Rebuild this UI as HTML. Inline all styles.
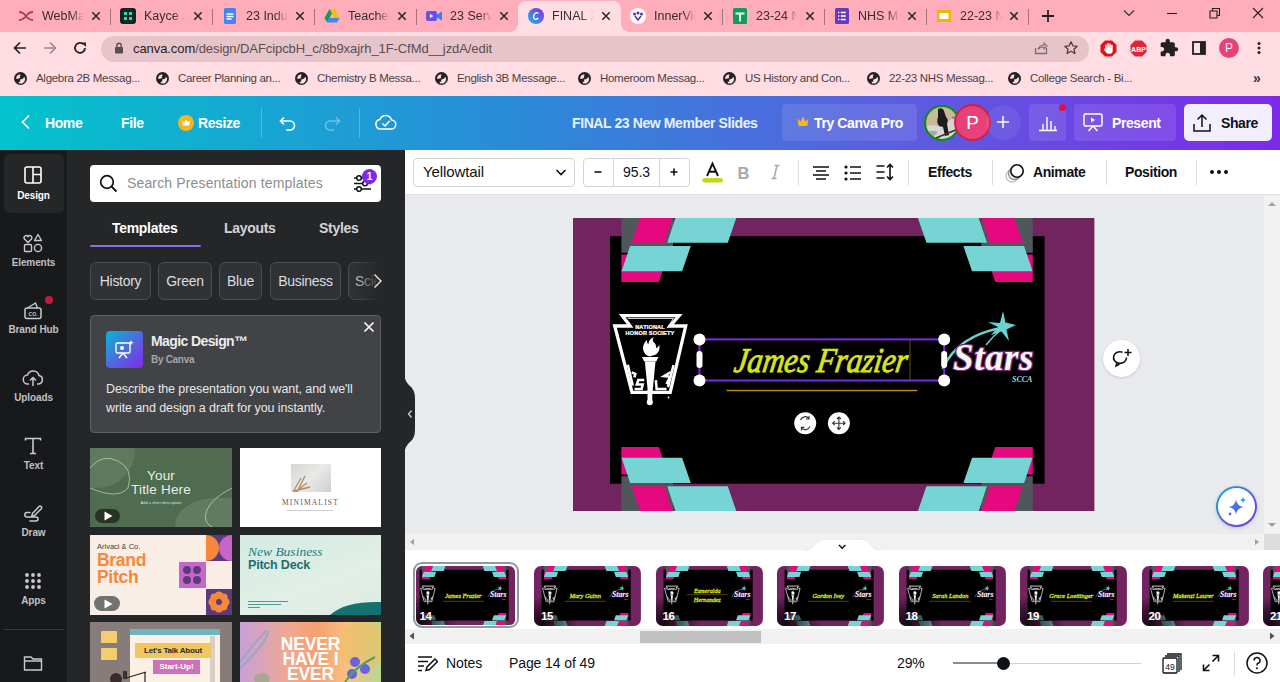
<!DOCTYPE html>
<html><head><meta charset="utf-8">
<style>
*{box-sizing:border-box;margin:0;padding:0}
html,body{width:1280px;height:682px;overflow:hidden;font-family:"Liberation Sans",sans-serif;background:#e8e9ed}
.a{position:absolute}
#tabs{left:0;top:0;width:1280px;height:32px;background:#ffadbb}
.tab{position:absolute;top:0;height:32px;width:103px}
.tab .ic{position:absolute;left:17px;top:8px;width:16px;height:16px}
.tab .t{position:absolute;left:42px;top:8px;width:42px;overflow:hidden;white-space:nowrap;font-size:12.5px;color:#3b2a2e;-webkit-mask-image:linear-gradient(90deg,#000 70%,transparent)}
.tab .x{position:absolute;left:78px;top:8px;width:16px;height:16px}
.tab .sep{position:absolute;left:109px;top:9px;width:1px;height:16px;background:#a5757e}
#addr{left:0;top:32px;width:1280px;height:32px;background:#ffdde3}
#omni{left:101px;top:36px;width:988px;height:26px;border-radius:13px;background:#e6c4ca}
#bm{left:0;top:64px;width:1280px;height:32px;background:#ffdde3}
.bk{position:absolute;top:0;height:32px;font-size:11.5px;letter-spacing:-0.3px;color:#4a3f43;white-space:nowrap}
.bk svg{position:absolute;left:1px;top:8px}
.bk span{position:absolute;left:23px;top:8px}
#hdr{left:0;top:96px;width:1280px;height:54px;background:linear-gradient(90deg,#03c3cc 0%,#2a8bd8 40%,#5b5ee0 70%,#7d2ae8 100%)}
.ht{position:absolute;color:#fff;font-weight:bold;font-size:14px;letter-spacing:-0.4px;line-height:16px;white-space:nowrap}
#side{left:0;top:150px;width:67px;height:532px;background:#18191b}
.si{position:absolute;left:0;width:67px;text-align:center;color:#bfc0c3;font-size:10px;font-weight:bold;letter-spacing:-0.1px}
#panel{left:67px;top:150px;width:338px;height:532px;background:#252627}
#tool{left:405px;top:150px;width:875px;height:45px;background:#fff;border-bottom:1px solid #dfe1e5}
#canvas{left:405px;top:195px;width:859px;height:339px;background:#e9eaee}
#film{left:405px;top:550px;width:875px;height:92px;background:#fff}
#bot{left:405px;top:642px;width:875px;height:40px;background:#fff}

.tab .ic{left:17px}
.tab .t{left:41px;top:9px}
.tab .x{position:absolute;left:87px;top:8px}
.tab.act::before{content:"";position:absolute;left:7px;top:1px;width:103px;height:31px;background:#ffdde3;border-radius:8px 8px 0 0}
.tab.act .ic,.tab.act .t,.tab.act .x{z-index:1}
.tab.act::after{content:"";position:absolute;left:-1px;top:24px;width:119px;height:8px;background:radial-gradient(circle at 0 0,transparent 7.5px,#ffdde3 8px) left top/8px 8px no-repeat,radial-gradient(circle at 100% 0,transparent 7.5px,#ffdde3 8px) right top/8px 8px no-repeat}
.chip{position:absolute;top:262px;height:38px;border-radius:6px;background:#313235;border:1px solid #4b4c50;color:#dcdde0;font-size:14px;text-align:center;line-height:36px;letter-spacing:-0.3px;white-space:nowrap;overflow:hidden}
.tb{position:absolute;top:164px;font-size:14px;font-weight:bold;letter-spacing:-0.4px;color:#0d1216;white-space:nowrap;line-height:16px}
.bt{position:absolute;top:655px;font-size:14px;color:#0d1216;white-space:nowrap;line-height:16px;letter-spacing:-0.1px}
</style></head><body>
<div id="tabs" class="a">
<div class="tab" style="left:1px"><div class="ic"><svg width="16" height="16" viewBox="0 0 16 16"><path d="M1 4 Q5 4 8 8 Q11 12 15 12 M1 12 Q5 12 8 8 Q11 4 15 4" stroke="#b0404a" stroke-width="1.8" fill="none"/></svg></div><div class="t">WebMail</div><svg class="x" width="16" height="16" viewBox="0 0 16 16"><path d="M4.3 4.3l7.4 7.4M11.7 4.3l-7.4 7.4" stroke="#2a2a2a" stroke-width="1.6"/></svg><div class="sep"></div></div>
<div class="tab" style="left:103px"><div class="ic"><svg width="16" height="16" viewBox="0 0 16 16"><rect x="0" y="0" width="16" height="16" rx="3" fill="#0c2a22"/><path d="M4 4h3v3H4zM9 4h3v3H9zM4 9h3v3H4zM9 9h3v3H9z" fill="#3fd9a0"/></svg></div><div class="t">Kayce Jones</div><svg class="x" width="16" height="16" viewBox="0 0 16 16"><path d="M4.3 4.3l7.4 7.4M11.7 4.3l-7.4 7.4" stroke="#2a2a2a" stroke-width="1.6"/></svg><div class="sep"></div></div>
<div class="tab" style="left:205px"><div class="ic"><svg width="16" height="16" viewBox="0 0 16 16"><rect x="2" y="0" width="12" height="16" rx="1.5" fill="#4286f5"/><path d="M4.5 6h7M4.5 8.5h7M4.5 11h5" stroke="#fff" stroke-width="1.3"/></svg></div><div class="t">23 Induction</div><svg class="x" width="16" height="16" viewBox="0 0 16 16"><path d="M4.3 4.3l7.4 7.4M11.7 4.3l-7.4 7.4" stroke="#2a2a2a" stroke-width="1.6"/></svg><div class="sep"></div></div>
<div class="tab" style="left:307px"><div class="ic"><svg width="16" height="16" viewBox="0 0 16 16"><path d="M5.5 1h5l5 9h-5z" fill="#fbbc04"/><path d="M5.5 1L0.5 10l2.5 4.5 5-9z" fill="#0f9d58"/><path d="M3 14.5h10l2.5-4.5h-10z" fill="#4285f4"/></svg></div><div class="t">Teacher's</div><svg class="x" width="16" height="16" viewBox="0 0 16 16"><path d="M4.3 4.3l7.4 7.4M11.7 4.3l-7.4 7.4" stroke="#2a2a2a" stroke-width="1.6"/></svg><div class="sep"></div></div>
<div class="tab" style="left:409px"><div class="ic"><svg width="16" height="16" viewBox="0 0 16 16"><rect x="0" y="3" width="11" height="10" rx="2" fill="#6a4ff0"/><path d="M11 6.5l5-3v9l-5-3z" fill="#3a7cf0"/><path d="M4 6l3.5 2L4 10z" fill="#fff"/></svg></div><div class="t">23 Service</div><svg class="x" width="16" height="16" viewBox="0 0 16 16"><path d="M4.3 4.3l7.4 7.4M11.7 4.3l-7.4 7.4" stroke="#2a2a2a" stroke-width="1.6"/></svg></div>
<div class="tab act" style="left:511px"><div class="ic"><svg width="16" height="16" viewBox="0 0 16 16"><defs><linearGradient id="cg" x1="0" y1="1" x2="1" y2="0"><stop offset="0" stop-color="#20b8e0"/><stop offset="1" stop-color="#7d2ae8"/></linearGradient></defs><circle cx="8" cy="8" r="8" fill="url(#cg)"/><path d="M10.5 5.2Q8 3.8 6.2 6.5Q4.8 9.5 6.5 11Q8.2 12 10.3 10" stroke="#fff" stroke-width="1.3" fill="none"/></svg></div><div class="t">FINAL 23 New</div><svg class="x" width="16" height="16" viewBox="0 0 16 16"><path d="M4.3 4.3l7.4 7.4M11.7 4.3l-7.4 7.4" stroke="#2a2a2a" stroke-width="1.6"/></svg></div>
<div class="tab" style="left:613px"><div class="ic"><svg width="16" height="16" viewBox="0 0 16 16"><circle cx="8" cy="8" r="8" fill="#fff"/><circle cx="4.5" cy="6" r="1.5" fill="#6b2c91"/><circle cx="11.5" cy="6" r="1.5" fill="#6b2c91"/><circle cx="8" cy="5" r="1.5" fill="#6b2c91"/><path d="M5 8l3 4 3-4" stroke="#6b2c91" stroke-width="1.6" fill="none"/></svg></div><div class="t">InnerView</div><svg class="x" width="16" height="16" viewBox="0 0 16 16"><path d="M4.3 4.3l7.4 7.4M11.7 4.3l-7.4 7.4" stroke="#2a2a2a" stroke-width="1.6"/></svg><div class="sep"></div></div>
<div class="tab" style="left:715px"><div class="ic"><svg width="16" height="16" viewBox="0 0 16 16"><rect x="1" y="0" width="14" height="16" rx="1.5" fill="#0f9d58"/><path d="M3.5 5.5h9M8 5.5v8" stroke="#fff" stroke-width="1.8"/></svg></div><div class="t">23-24 NHS</div><svg class="x" width="16" height="16" viewBox="0 0 16 16"><path d="M4.3 4.3l7.4 7.4M11.7 4.3l-7.4 7.4" stroke="#2a2a2a" stroke-width="1.6"/></svg><div class="sep"></div></div>
<div class="tab" style="left:817px"><div class="ic"><svg width="16" height="16" viewBox="0 0 16 16"><rect x="1" y="0" width="14" height="16" rx="1.5" fill="#673ab7"/><path d="M4 4.5h1.3M4 8h1.3M4 11.5h1.3M6.8 4.5h5M6.8 8h5M6.8 11.5h5" stroke="#fff" stroke-width="1.4"/></svg></div><div class="t">NHS Meeting</div><svg class="x" width="16" height="16" viewBox="0 0 16 16"><path d="M4.3 4.3l7.4 7.4M11.7 4.3l-7.4 7.4" stroke="#2a2a2a" stroke-width="1.6"/></svg><div class="sep"></div></div>
<div class="tab" style="left:919px"><div class="ic"><svg width="16" height="16" viewBox="0 0 16 16"><rect x="1" y="2" width="14" height="12" rx="1.5" fill="#f4b400"/><rect x="3.5" y="5" width="9" height="6" fill="#fff"/></svg></div><div class="t">22-23 NHS</div><svg class="x" width="16" height="16" viewBox="0 0 16 16"><path d="M4.3 4.3l7.4 7.4M11.7 4.3l-7.4 7.4" stroke="#2a2a2a" stroke-width="1.6"/></svg><div class="sep"></div></div>

</div>
<div id="addr" class="a"></div>
<div id="omni" class="a"></div>
<div id="bm" class="a"></div>

<svg class="a" style="left:1040px;top:8px" width="16" height="16" viewBox="0 0 16 16"><path d="M8 2v12M2 8h12" stroke="#222" stroke-width="1.8"/></svg>
<svg class="a" style="left:1121px;top:5px" width="16" height="16" viewBox="0 0 16 16"><path d="M3 5.5l5 5 5-5" stroke="#333" stroke-width="1.2" fill="none"/></svg>
<svg class="a" style="left:1164px;top:5px" width="16" height="16" viewBox="0 0 16 16"><path d="M3 8.5h10" stroke="#222" stroke-width="1.1"/></svg>
<svg class="a" style="left:1207px;top:5px" width="16" height="16" viewBox="0 0 16 16"><path d="M3 6h7v7H3z M5.5 6V3.5h7v7H10" stroke="#222" stroke-width="1.1" fill="none"/></svg>
<svg class="a" style="left:1250px;top:5px" width="16" height="16" viewBox="0 0 16 16"><path d="M3 3l10 10M13 3L3 13" stroke="#222" stroke-width="1.1"/></svg>

<svg class="a" style="left:12px;top:40px" width="16" height="16" viewBox="0 0 16 16"><path d="M14 8H2.5M8 2.5L2.5 8 8 13.5" stroke="#222" stroke-width="1.7" fill="none"/></svg>
<svg class="a" style="left:42px;top:40px" width="16" height="16" viewBox="0 0 16 16"><path d="M2 8h11.5M8 2.5L13.5 8 8 13.5" stroke="#9a8a8e" stroke-width="1.7" fill="none"/></svg>
<svg class="a" style="left:72px;top:40px" width="16" height="16" viewBox="0 0 16 16"><path d="M13 8A5 5 0 1 1 11.5 4.3" stroke="#222" stroke-width="1.8" fill="none"/><path d="M9.5 2.5h4.5V7z" fill="#222"/></svg>
<svg class="a" style="left:112px;top:41px" width="14" height="14" viewBox="0 0 14 14"><rect x="3" y="6" width="8" height="6.5" rx="1" fill="#5a4d51"/><path d="M4.8 6V4.5a2.2 2.2 0 0 1 4.4 0V6" stroke="#5a4d51" stroke-width="1.4" fill="none"/></svg>
<div class="a" style="left:133px;top:41px;font-size:13px;color:#5a4d51;white-space:nowrap;letter-spacing:-0.08px"><span style="color:#2a2023">canva.com</span>/design/DAFcipcbH_c/8b9xajrh_1F-CfMd__jzdA/edit</div>
<svg class="a" style="left:1033px;top:40px" width="16" height="16" viewBox="0 0 16 16"><path d="M2.5 8v5.5h11V8" stroke="#7a6d71" stroke-width="1.3" fill="none"/><path d="M5 9.5q1-4 6-4.5V3l3 3-3 3V7q-4 0-6 2.5z" stroke="#7a6d71" stroke-width="1.1" fill="none"/></svg>
<svg class="a" style="left:1063px;top:40px" width="16" height="16" viewBox="0 0 16 16"><path d="M8 1.8l1.9 4 4.3.5-3.2 2.9.9 4.3L8 11.3l-3.9 2.2.9-4.3-3.2-2.9 4.3-.5z" stroke="#4a3d41" stroke-width="1.3" fill="none" stroke-linejoin="round"/></svg>
<svg class="a" style="left:1100px;top:40px" width="17" height="17" viewBox="0 0 17 17"><path d="M5 0.5h7l4.5 4.5v7L12 16.5H5L0.5 12V5z" fill="#e0121b"/><path d="M5.2 9.5V5.2a.8.8 0 0 1 1.6 0V8h.4V3.8a.8.8 0 0 1 1.6 0V8h.4V4.2a.8.8 0 0 1 1.6 0V8.3h.3V5.5a.8.8 0 0 1 1.6 0v5.2q0 3-3 3H8.6q-1.5 0-2.5-1.3L4 9.8a.8.8 0 0 1 1.2-1z" fill="#fff"/></svg>
<svg class="a" style="left:1130px;top:40px" width="17" height="17" viewBox="0 0 17 17"><path d="M5 0.5h7l4.5 4.5v7L12 16.5H5L0.5 12V5z" fill="#e0243a"/><text x="8.5" y="11.5" font-family="Liberation Sans" font-weight="bold" font-size="7" fill="#fff" text-anchor="middle">ABP</text></svg>
<svg class="a" style="left:1159px;top:38px" width="20" height="20" viewBox="0 0 24 24"><path d="M20.5 11H19V7c0-1.1-.9-2-2-2h-4V3.5C13 2.12 11.88 1 10.5 1S8 2.12 8 3.5V5H4c-1.1 0-1.99.9-1.99 2v3.8H3.5c1.49 0 2.7 1.21 2.7 2.7s-1.21 2.7-2.7 2.7H2V20c0 1.1.9 2 2 2h3.8v-1.5c0-1.490 1.21-2.7 2.7-2.7 1.49 0 2.7 1.21 2.7 2.7V22H17c1.1 0 2-.9 2-2v-4h1.5c1.38 0 2.5-1.12 2.5-2.5S21.88 11 20.5 11z" fill="#222"/></svg>
<svg class="a" style="left:1191px;top:40px" width="16" height="16" viewBox="0 0 16 16"><rect x="2" y="2" width="12" height="12" fill="none" stroke="#222" stroke-width="1.8"/><rect x="9" y="2" width="5" height="12" fill="#222"/></svg>
<div class="a" style="left:1219px;top:38px;width:20px;height:20px;border-radius:50%;background:#e8407a;color:#fff;font-size:12px;text-align:center;line-height:20px">P</div>
<svg class="a" style="left:1251px;top:40px" width="16" height="16" viewBox="0 0 16 16"><circle cx="8" cy="3.5" r="1.5" fill="#222"/><circle cx="8" cy="8" r="1.5" fill="#222"/><circle cx="8" cy="12.5" r="1.5" fill="#222"/></svg>
<div class="bk" style="left:13px;top:64px"><svg width="13" height="13" viewBox="0 0 13 13"><circle cx="6.5" cy="6.5" r="6.5" fill="#222"/><path d="M2.1 5.8L3.4 3.2 6 2.2 6.6 3.2 5.7 4.5 6.3 5.8 4.1 6.8 2.1 6.8z M4.4 10.6L6.6 9 5.7 7.7 8.9 6.8 10.2 4.8 11.2 6.8 10.5 9.6 8.3 11.6 5.4 11.6z" fill="#ffdde3"/></svg><span>Algebra 2B Messag...</span></div>
<div class="bk" style="left:155px;top:64px"><svg width="13" height="13" viewBox="0 0 13 13"><circle cx="6.5" cy="6.5" r="6.5" fill="#222"/><path d="M2.1 5.8L3.4 3.2 6 2.2 6.6 3.2 5.7 4.5 6.3 5.8 4.1 6.8 2.1 6.8z M4.4 10.6L6.6 9 5.7 7.7 8.9 6.8 10.2 4.8 11.2 6.8 10.5 9.6 8.3 11.6 5.4 11.6z" fill="#ffdde3"/></svg><span>Career Planning an...</span></div>
<div class="bk" style="left:294px;top:64px"><svg width="13" height="13" viewBox="0 0 13 13"><circle cx="6.5" cy="6.5" r="6.5" fill="#222"/><path d="M2.1 5.8L3.4 3.2 6 2.2 6.6 3.2 5.7 4.5 6.3 5.8 4.1 6.8 2.1 6.8z M4.4 10.6L6.6 9 5.7 7.7 8.9 6.8 10.2 4.8 11.2 6.8 10.5 9.6 8.3 11.6 5.4 11.6z" fill="#ffdde3"/></svg><span>Chemistry B Messa...</span></div>
<div class="bk" style="left:434px;top:64px"><svg width="13" height="13" viewBox="0 0 13 13"><circle cx="6.5" cy="6.5" r="6.5" fill="#222"/><path d="M2.1 5.8L3.4 3.2 6 2.2 6.6 3.2 5.7 4.5 6.3 5.8 4.1 6.8 2.1 6.8z M4.4 10.6L6.6 9 5.7 7.7 8.9 6.8 10.2 4.8 11.2 6.8 10.5 9.6 8.3 11.6 5.4 11.6z" fill="#ffdde3"/></svg><span>English 3B Message...</span></div>
<div class="bk" style="left:577px;top:64px"><svg width="13" height="13" viewBox="0 0 13 13"><circle cx="6.5" cy="6.5" r="6.5" fill="#222"/><path d="M2.1 5.8L3.4 3.2 6 2.2 6.6 3.2 5.7 4.5 6.3 5.8 4.1 6.8 2.1 6.8z M4.4 10.6L6.6 9 5.7 7.7 8.9 6.8 10.2 4.8 11.2 6.8 10.5 9.6 8.3 11.6 5.4 11.6z" fill="#ffdde3"/></svg><span>Homeroom Messag...</span></div>
<div class="bk" style="left:722px;top:64px"><svg width="13" height="13" viewBox="0 0 13 13"><circle cx="6.5" cy="6.5" r="6.5" fill="#222"/><path d="M2.1 5.8L3.4 3.2 6 2.2 6.6 3.2 5.7 4.5 6.3 5.8 4.1 6.8 2.1 6.8z M4.4 10.6L6.6 9 5.7 7.7 8.9 6.8 10.2 4.8 11.2 6.8 10.5 9.6 8.3 11.6 5.4 11.6z" fill="#ffdde3"/></svg><span>US History and Con...</span></div>
<div class="bk" style="left:866px;top:64px"><svg width="13" height="13" viewBox="0 0 13 13"><circle cx="6.5" cy="6.5" r="6.5" fill="#222"/><path d="M2.1 5.8L3.4 3.2 6 2.2 6.6 3.2 5.7 4.5 6.3 5.8 4.1 6.8 2.1 6.8z M4.4 10.6L6.6 9 5.7 7.7 8.9 6.8 10.2 4.8 11.2 6.8 10.5 9.6 8.3 11.6 5.4 11.6z" fill="#ffdde3"/></svg><span>22-23 NHS Messag...</span></div>
<div class="bk" style="left:1007px;top:64px"><svg width="13" height="13" viewBox="0 0 13 13"><circle cx="6.5" cy="6.5" r="6.5" fill="#222"/><path d="M2.1 5.8L3.4 3.2 6 2.2 6.6 3.2 5.7 4.5 6.3 5.8 4.1 6.8 2.1 6.8z M4.4 10.6L6.6 9 5.7 7.7 8.9 6.8 10.2 4.8 11.2 6.8 10.5 9.6 8.3 11.6 5.4 11.6z" fill="#ffdde3"/></svg><span>College Search - Bi...</span></div>
<div class="a" style="left:1253px;top:70px;font-size:14px;font-weight:bold;color:#333">&raquo;</div>

<div id="hdr" class="a"></div>

<svg class="a" style="left:18px;top:114px" width="16" height="16" viewBox="0 0 16 16"><path d="M11 1.5L4.5 8l6.5 6.5" stroke="#fff" stroke-width="1.6" fill="none"/></svg>
<div class="ht" style="left:45px;top:115px">Home</div>
<div class="ht" style="left:121px;top:115px">File</div>
<svg class="a" style="left:178px;top:115px" width="16" height="16" viewBox="0 0 16 16"><circle cx="8" cy="8" r="8" fill="#f8b51c"/><path d="M4 5.5l2 2 2-3 2 3 2-2-.8 5H4.8z" fill="#fff"/></svg>
<div class="ht" style="left:198px;top:115px">Resize</div>
<div class="a" style="left:261px;top:108px;width:1px;height:30px;background:rgba(255,255,255,.25)"></div>
<svg class="a" style="left:278px;top:113px" width="20" height="20" viewBox="0 0 20 20"><path d="M6 4.5L2.5 8 6 11.5" stroke="#fff" stroke-width="1.6" fill="none"/><path d="M3 8h9a4.5 4.5 0 0 1 0 9H8" stroke="#fff" stroke-width="1.6" fill="none"/></svg>
<svg class="a" style="left:322px;top:113px" width="20" height="20" viewBox="0 0 20 20"><path d="M14 4.5L17.5 8 14 11.5" stroke="rgba(255,255,255,.35)" stroke-width="1.6" fill="none"/><path d="M17 8H8a4.5 4.5 0 0 0 0 9h4" stroke="rgba(255,255,255,.35)" stroke-width="1.6" fill="none"/></svg>
<div class="a" style="left:359px;top:108px;width:1px;height:30px;background:rgba(255,255,255,.25)"></div>
<svg class="a" style="left:374px;top:111px" width="23" height="23" viewBox="0 0 23 23"><path d="M6 18h11a4.5 4.5 0 0 0 .5-9A6 6 0 0 0 6 8.5 4.8 4.8 0 0 0 6 18z" stroke="#fff" stroke-width="1.5" fill="none"/><path d="M8.5 12.5l2.5 2.5 4.5-5" stroke="#fff" stroke-width="1.5" fill="none"/></svg>
<div class="ht" style="left:572px;top:115px;color:#e8f1ff">FINAL 23 New Member Slides</div>
<div class="a" style="left:782px;top:104px;width:135px;height:37px;border-radius:4px;background:rgba(255,255,255,.1)"></div>
<svg class="a" style="left:797px;top:116px" width="12" height="11" viewBox="0 0 12 11"><path d="M0.5 2.5l3 3 2.5-5 2.5 5 3-3-1.2 7.5H1.7z" fill="#f8b51c"/></svg>
<div class="ht" style="left:814px;top:115px">Try Canva Pro</div>
<svg class="a" style="left:923.5px;top:104.5px" width="36" height="36" viewBox="0 0 36 36"><defs><clipPath id="av"><circle cx="18" cy="18" r="17"/></clipPath></defs><g clip-path="url(#av)"><rect width="36" height="36" fill="#c9b994"/><path d="M0 22 Q6 19 14 21 Q22 18 28 14 Q33 12 36 16 V36 H0z" fill="#d6d6d2"/><path d="M2 28 Q8 24 14 27 Q10 32 4 34z" fill="#a8a8a8"/><path d="M14 4 Q19 2 20 6 L22 12 Q25 15 23 19 L25 30 L21 31 L19 22 L15 21 Q12 17 14 12z" fill="#1c1c1c"/><path d="M12 33 L34 24" stroke="#333" stroke-width="1.6"/><path d="M28 13 Q32 11 34 15" stroke="#888" stroke-width="2" fill="none"/></g><circle cx="18" cy="18" r="17" fill="none" stroke="#118a22" stroke-width="2.2"/></svg>
<div class="a" style="left:954px;top:104px;width:37px;height:37px;border-radius:50%;border:2px solid #d0213f;background:#e8407a;color:#fff;font-size:19px;text-align:center;line-height:33px">P</div>
<div class="a" style="left:986px;top:105px;width:35px;height:35px;border-radius:50%;background:rgba(255,255,255,.07);"></div>
<svg class="a" style="left:995px;top:114px" width="16" height="16" viewBox="0 0 16 16"><path d="M8 2v12M2 8h12" stroke="#fff" stroke-width="1.5"/></svg>
<div class="a" style="left:1029px;top:104px;width:37px;height:37px;border-radius:4px;background:rgba(255,255,255,.1)"></div>
<svg class="a" style="left:1037px;top:112px" width="22" height="22" viewBox="0 0 22 22"><path d="M2 18.5h18M6 18V12M10 18V5M14 18V9M18 18v-4" stroke="#fff" stroke-width="1.4"/></svg>
<div class="a" style="left:1059px;top:104px;width:7px;height:7px;border-radius:50%;background:#e0123a"></div>
<div class="a" style="left:1074px;top:104px;width:102px;height:37px;border-radius:4px;background:rgba(255,255,255,.1)"></div>
<svg class="a" style="left:1082px;top:111px" width="22" height="22" viewBox="0 0 22 22"><rect x="2" y="3" width="18" height="12" rx="1.5" stroke="#fff" stroke-width="1.5" fill="none"/><path d="M9 6.5v5l4-2.5z" fill="#fff"/><path d="M11 15l-4.5 5M11 15l4.5 5" stroke="#fff" stroke-width="1.5"/></svg>
<div class="ht" style="left:1112px;top:115px">Present</div>
<div class="a" style="left:1184px;top:104px;width:88px;height:37px;border-radius:5px;background:#f2eefd"></div>
<svg class="a" style="left:1191px;top:112px" width="22" height="22" viewBox="0 0 22 22"><path d="M3 12v7h16v-7" stroke="#0d1216" stroke-width="1.5" fill="none"/><path d="M11 15V3M6.5 7.5L11 3l4.5 4.5" stroke="#0d1216" stroke-width="1.5" fill="none"/></svg>
<div class="ht" style="left:1221px;top:115px;color:#0d1216">Share</div>
<div id="side" class="a"></div>
<div id="panel" class="a"></div>
<div class="a" style="left:4px;top:154px;width:60px;height:59px;border-radius:6px;background:#252627"></div>
<svg class="a" style="left:22px;top:164px" width="22" height="22" viewBox="0 0 22 22"><rect x="3" y="3" width="16" height="16" rx="2" stroke="#fff" stroke-width="1.6" fill="none"/><path d="M11 3v16M11 10.5h8" stroke="#fff" stroke-width="1.6"/></svg>
<div class="si" style="top:190px;color:#fff">Design</div>
<svg class="a" style="left:22px;top:232px" width="22" height="22" viewBox="0 0 22 22"><path d="M6 10.5L2.5 7a2 2 0 0 1 3.5-2.5A2 2 0 0 1 9.5 7z" stroke="#c9cacc" stroke-width="1.4" fill="none"/><path d="M16 2.5l3.5 6h-7z" stroke="#c9cacc" stroke-width="1.4" fill="none" stroke-linejoin="round"/><rect x="2.5" y="12.5" width="7" height="7" rx="1" stroke="#c9cacc" stroke-width="1.4" fill="none"/><circle cx="16" cy="16" r="3.6" stroke="#c9cacc" stroke-width="1.4" fill="none"/></svg>
<div class="si" style="top:257px">Elements</div>
<svg class="a" style="left:22px;top:299px" width="22" height="22" viewBox="0 0 22 22"><rect x="3" y="9" width="16" height="10.5" rx="2" stroke="#c9cacc" stroke-width="1.5" fill="none"/><path d="M5.5 9l8-5 2 5" stroke="#c9cacc" stroke-width="1.4" fill="none"/><text x="11" y="16.8" font-family="Liberation Sans" font-weight="bold" font-size="5" fill="#c9cacc" text-anchor="middle">CO.</text></svg>
<div class="a" style="left:45px;top:296px;width:8px;height:8px;border-radius:50%;background:#c01b3a"></div>
<div class="si" style="top:324px">Brand Hub</div>
<svg class="a" style="left:22px;top:367px" width="22" height="22" viewBox="0 0 22 22"><path d="M7 17H6a4.5 4.5 0 0 1-.5-9A6 6 0 0 1 17 8.5a4.3 4.3 0 0 1-1 8.5h-1" stroke="#c9cacc" stroke-width="1.5" fill="none"/><path d="M11 19v-8M8 13.5l3-3 3 3" stroke="#c9cacc" stroke-width="1.5" fill="none"/></svg>
<div class="si" style="top:392px">Uploads</div>
<svg class="a" style="left:22px;top:435px" width="22" height="22" viewBox="0 0 22 22"><path d="M3.5 5.5V3.5h15v2M11 3.5v15M8 18.5h6" stroke="#c9cacc" stroke-width="1.6" fill="none"/></svg>
<div class="si" style="top:460px">Text</div>
<svg class="a" style="left:22px;top:502px" width="22" height="22" viewBox="0 0 22 22"><path d="M10.5 11.5l6.5-7a1.6 1.6 0 0 1 2.3 2.2l-6.8 6.8-2.8.8z" stroke="#c9cacc" stroke-width="1.5" fill="none" stroke-linejoin="round"/><path d="M8 10.5H5a2.2 2.2 0 0 0 0 4.4h9a2 2 0 0 1 0 4H8" stroke="#c9cacc" stroke-width="1.5" fill="none" stroke-linecap="round"/></svg>
<div class="si" style="top:527px">Draw</div>
<svg class="a" style="left:24px;top:572px" width="18" height="18" viewBox="0 0 18 18"><g fill="#c9cacc"><circle cx="3" cy="3" r="1.9"/><circle cx="9" cy="3" r="1.9"/><circle cx="15" cy="3" r="1.9"/><circle cx="3" cy="9" r="1.9"/><circle cx="9" cy="9" r="1.9"/><circle cx="15" cy="9" r="1.9"/><circle cx="3" cy="15" r="1.9"/><circle cx="9" cy="15" r="1.9"/><circle cx="15" cy="15" r="1.9"/></g></svg>
<div class="si" style="top:595px">Apps</div>
<div class="a" style="left:4px;top:629px;width:60px;height:1px;background:#3a3b3e"></div>
<svg class="a" style="left:22px;top:652px" width="22" height="22" viewBox="0 0 22 22"><path d="M2.5 5h6.5l2 2h8.5v11h-17z M2.5 9h17" stroke="#c9cacc" stroke-width="1.4" fill="none"/></svg>

<div class="a" style="left:90px;top:165px;width:291px;height:37px;border-radius:4px;background:#fff"></div>
<svg class="a" style="left:98px;top:173px" width="21" height="21" viewBox="0 0 21 21"><circle cx="9" cy="9" r="6.3" stroke="#0d1216" stroke-width="1.7" fill="none"/><path d="M13.5 13.5l5 5" stroke="#0d1216" stroke-width="1.8"/></svg>
<div class="a" style="left:127px;top:175px;font-size:14px;color:#8a8d91;white-space:nowrap;letter-spacing:0.15px">Search Presentation templates</div>
<svg class="a" style="left:352px;top:173px" width="21" height="21" viewBox="0 0 21 21"><path d="M2 5h17M2 10.5h17M2 16h17" stroke="#0d1216" stroke-width="1.5"/><circle cx="7" cy="5" r="2.3" fill="#fff" stroke="#0d1216" stroke-width="1.5"/><circle cx="13" cy="10.5" r="2.3" fill="#fff" stroke="#0d1216" stroke-width="1.5"/><circle cx="7" cy="16" r="2.3" fill="#fff" stroke="#0d1216" stroke-width="1.5"/></svg>
<div class="a" style="left:362px;top:169px;width:15px;height:15px;border-radius:50%;background:#7d2ae8;color:#fff;font-size:10px;font-weight:bold;text-align:center;line-height:15px">1</div>
<div class="a" style="left:112px;top:220px;font-size:14px;font-weight:bold;color:#fff;letter-spacing:-0.3px">Templates</div>
<div class="a" style="left:90px;top:245px;width:111px;height:2px;background:#8b6ff0;border-radius:1px"></div>
<div class="a" style="left:224px;top:220px;font-size:14px;font-weight:bold;color:#d2d3d6;letter-spacing:-0.3px">Layouts</div>
<div class="a" style="left:319px;top:220px;font-size:14px;font-weight:bold;color:#d2d3d6;letter-spacing:-0.3px">Styles</div>
<div class="chip" style="left:90px;width:61px">History</div>
<div class="chip" style="left:158px;width:54px">Green</div>
<div class="chip" style="left:219px;width:43px">Blue</div>
<div class="chip" style="left:270px;width:71px">Business</div>
<div class="a" style="left:348px;top:262px;width:33px;height:38px;overflow:hidden"><div class="chip" style="left:0;top:0;width:60px;text-align:left;padding-left:6px">Science</div></div>
<div class="a" style="left:352px;top:262px;width:30px;height:38px;background:linear-gradient(90deg,rgba(37,38,39,0),#252627 95%)"></div>
<svg class="a" style="left:370px;top:273px" width="14" height="16" viewBox="0 0 14 16"><path d="M4.5 1.5l6.5 6.5-6.5 6.5" stroke="#e8e8e8" stroke-width="1.4" fill="none"/></svg>
<div class="a" style="left:90px;top:315px;width:291px;height:118px;border-radius:4px;background:#424346;border:1px solid #5d5e61"></div>
<div class="a" style="left:106px;top:331px;width:37px;height:37px;border-radius:4px;background:linear-gradient(135deg,#03b8d4,#5b5ee0 60%,#7d2ae8)"></div>
<svg class="a" style="left:112px;top:337px" width="25" height="25" viewBox="0 0 25 25"><rect x="4" y="6" width="14" height="10" rx="1.5" stroke="#fff" stroke-width="1.4" fill="none"/><circle cx="10" cy="11" r="2" fill="#fff"/><path d="M11 16l-4 5M11 16l4 5" stroke="#fff" stroke-width="1.4"/><path d="M19 3l.8 2 2 .8-2 .8-.8 2-.8-2-2-.8 2-.8z" fill="#fff"/></svg>
<div class="a" style="left:151px;top:333px;font-size:14px;font-weight:bold;color:#ececec;letter-spacing:-0.6px">Magic Design&trade;</div>
<div class="a" style="left:151px;top:353.5px;font-size:10px;font-weight:bold;color:#a5a6a9;letter-spacing:-0.3px">By Canva</div>
<svg class="a" style="left:362px;top:320px" width="14" height="14" viewBox="0 0 14 14"><path d="M2.5 2.5l9 9M11.5 2.5l-9 9" stroke="#fff" stroke-width="1.6"/></svg>
<div class="a" style="left:106px;top:380px;font-size:12.5px;color:#e8e8e8;line-height:19px;letter-spacing:-0.1px;white-space:nowrap">Describe the presentation you want, and we'll<br>write and design a draft for you instantly.</div>




<div class="a" style="left:90px;top:448px;width:142px;height:79px;background:#4f6b50;overflow:hidden">
 <div class="a" style="left:-30px;top:-35px;width:75px;height:75px;border-radius:50%;background:#5d7a5e"></div>
 <div class="a" style="left:85px;top:50px;width:90px;height:60px;border-radius:45% 40% 0 0;background:#5f7c60"></div>
 <svg class="a" style="left:0;top:0" width="142" height="79"><path d="M0 20q12-15 28-7t10 27q-10 12-38 0M142 40q-20 10-25 22t5 17" stroke="#c8d8c0" stroke-width="0.7" fill="none"/></svg>
 <div class="a" style="left:0;top:20.5px;width:142px;text-align:center;color:#e8efe4;font-size:13.5px;line-height:14.5px;letter-spacing:0.2px">Your<br>Title Here</div>
 <div class="a" style="left:0;top:52px;width:142px;text-align:center;color:#d8e2d4;font-size:4px">Add a short description</div>
 <div class="a" style="left:5px;top:61px;width:25px;height:14px;border-radius:7px;background:#283328"></div>
 <svg class="a" style="left:13px;top:63px" width="10" height="10" viewBox="0 0 10 10"><path d="M1.5 0.5l8 4.5-8 4.5z" fill="#fff"/></svg>
</div>
<div class="a" style="left:240px;top:448px;width:141px;height:79px;background:#fff;overflow:hidden">
 <div class="a" style="left:51px;top:16px;width:40px;height:28px;background:linear-gradient(135deg,#d6d6d4,#e9e9e7 50%,#cfcfcd)"></div>
 <svg class="a" style="left:51px;top:22px" width="24" height="22" viewBox="0 0 24 22"><path d="M2 22L10 8M4 22l12-9M6 22l8-16M3 21l16-4" stroke="#b88a60" stroke-width="1.3"/></svg>
 <div class="a" style="left:0;top:50px;width:141px;text-align:center;color:#5a5a5a;font-family:'Liberation Serif',serif;font-size:7.5px;letter-spacing:1.2px">MINIMALIST</div>
 <div class="a" style="left:47px;top:62px;width:46px;height:1px;background:#d0d0d0"></div>
</div>
<div class="a" style="left:90px;top:535px;width:142px;height:80px;background:#f8eee6;overflow:hidden">
 <div class="a" style="left:7px;top:7px;font-size:7.5px;color:#3a3a3a;white-space:nowrap">Arivaci &amp; Co.</div>
 <div class="a" style="left:7px;top:16.5px;font-size:17.5px;font-weight:bold;color:#f5883a;line-height:17.5px;letter-spacing:-0.3px">Brand<br>Pitch</div>
 <div class="a" style="left:116px;top:0;width:26px;height:26px;background:#5b3b7e"></div>
 <div class="a" style="left:116px;top:0;width:13px;height:26px;background:#f5883a;border-radius:0 13px 13px 0"></div>
 <div class="a" style="left:129px;top:0;width:13px;height:26px;background:#c866c8;border-radius:13px 0 0 13px"></div>
 <div class="a" style="left:89px;top:27px;width:27px;height:26px;background:#c866c8"></div>
 <div class="a" style="left:93px;top:31px;width:8px;height:8px;border-radius:50%;background:#5b3b7e;box-shadow:10px 0 #5b3b7e,0 10px #5b3b7e,10px 10px #5b3b7e"></div>
 <div class="a" style="left:116px;top:54px;width:26px;height:26px;background:#5b3b7e"></div>
 <svg class="a" style="left:118px;top:56px" width="22" height="22" viewBox="0 0 22 22"><g fill="#f5883a"><circle cx="11" cy="4.5" r="4"/><circle cx="11" cy="17.5" r="4"/><circle cx="4.5" cy="11" r="4"/><circle cx="17.5" cy="11" r="4"/><circle cx="6.4" cy="6.4" r="4"/><circle cx="15.6" cy="6.4" r="4"/><circle cx="6.4" cy="15.6" r="4"/><circle cx="15.6" cy="15.6" r="4"/></g><circle cx="11" cy="11" r="3" fill="#5b3b7e"/></svg>
 <div class="a" style="left:4px;top:61px;width:26px;height:15px;border-radius:7.5px;background:rgba(60,60,60,.7)"></div>
 <svg class="a" style="left:13px;top:64px" width="10" height="10" viewBox="0 0 10 10"><path d="M1.5 0.5l8 4.5-8 4.5z" fill="#fff"/></svg>
</div>
<div class="a" style="left:240px;top:535px;width:141px;height:80px;background:linear-gradient(160deg,#d3ebe2,#e2efe6 60%,#dcebe3);overflow:hidden">
 <div class="a" style="left:8px;top:9px;font-family:'Liberation Serif',serif;font-style:italic;font-size:13.5px;color:#1b7c7d;white-space:nowrap">New Business</div>
 <div class="a" style="left:8px;top:23px;font-size:12.5px;font-weight:bold;color:#1b6f72;white-space:nowrap;letter-spacing:-0.2px">Pitch Deck</div>
 <div class="a" style="left:8px;top:66px;width:40px;height:1px;background:#4a9a9a"></div><div class="a" style="left:8px;top:69px;width:33px;height:1px;background:#4a9a9a"></div><div class="a" style="left:8px;top:72px;width:12px;height:1px;background:#4a9a9a"></div>
 <svg class="a" style="left:0;top:0" width="141" height="80"><path d="M90 80q15-14 52-13V80z" fill="#13726f"/></svg>
</div>
<div class="a" style="left:90px;top:622px;width:142px;height:60px;background:#877c79;overflow:hidden">
 <div class="a" style="left:11px;top:9px;width:16px;height:12px;background:#f2cd72;border-radius:1px"></div>
 <div class="a" style="left:11px;top:26px;width:16px;height:12px;background:#f2cd72;border-radius:1px"></div>
 <div class="a" style="left:40px;top:7px;width:90px;height:60px;background:#fbf0e3"></div>
 <div class="a" style="left:40px;top:7px;width:90px;height:6px;background:#6db3c0"></div>
 <div class="a" style="left:120px;top:14px;width:5px;height:60px;background:#d8d0c8"></div>
 <div class="a" style="left:45px;top:21px;width:76px;height:15px;background:#f0c860;font-size:8px;font-weight:bold;color:#2a2a2a;text-align:center;line-height:15px;white-space:nowrap;letter-spacing:-0.2px">Let's Talk About</div>
 <div class="a" style="left:63px;top:38px;width:47px;height:14px;background:#d070b8;font-size:8px;font-weight:bold;color:#fff;text-align:center;line-height:14px">Start-Up!</div>
 <svg class="a" style="left:0;top:0" width="142" height="60"><path d="M36 56l20-6M55 50v10" stroke="#222" stroke-width="1.2"/><circle cx="26" cy="57" r="6" fill="#3a2a2a"/><rect x="33" y="49" width="4" height="8" fill="#333"/></svg>
</div>
<div class="a" style="left:240px;top:622px;width:141px;height:60px;background:linear-gradient(90deg,#c8a0d8 0%,#f0a890 35%,#f5a070 55%,#f8c080 75%,#b8d890 100%);overflow:hidden">
 <div class="a" style="left:100px;top:0;width:45px;height:45px;border-radius:40%;background:rgba(240,190,100,.6)"></div>
 <svg class="a" style="left:0;top:0" width="141" height="60"><path d="M0 40q15-20 25-30 5-4 0 8-10 15-25 28" stroke="#9aa8c8" stroke-width="2.2" fill="none"/><ellipse cx="22" cy="57" rx="8" ry="6" fill="#a8a890"/><g fill="#6a60e0"><circle cx="115" cy="40" r="5"/><circle cx="125" cy="47" r="5"/><circle cx="112" cy="52" r="5"/></g><path d="M105 60q10-15 30-25" stroke="#50a060" stroke-width="2" fill="none"/></svg>
 <div class="a" style="left:0;top:15px;width:141px;text-align:center;color:#fff;font-size:17.5px;font-weight:bold;line-height:15px;letter-spacing:-0.2px">NEVER<br>HAVE I<br>EVER</div>
</div>
<div id="tool" class="a"></div>
<div id="canvas" class="a"></div>
<div class="a" style="left:413px;top:158px;width:162px;height:29px;border:1px solid #d3d4d8;border-radius:4px;background:#fff"></div>
<div class="tb" style="left:423px;font-weight:normal;font-size:15px;letter-spacing:-0.1px">Yellowtail</div>
<svg class="a" style="left:553px;top:164px" width="16" height="16" viewBox="0 0 16 16"><path d="M3.5 6l4.5 4.5L12.5 6" stroke="#0d1216" stroke-width="1.6" fill="none"/></svg>
<div class="a" style="left:583px;top:158px;width:107px;height:29px;border:1px solid #d3d4d8;border-radius:4px;background:#fff"></div>
<div class="a" style="left:613px;top:158px;width:1px;height:29px;background:#d3d4d8"></div>
<div class="a" style="left:659px;top:158px;width:1px;height:29px;background:#d3d4d8"></div>
<svg class="a" style="left:590px;top:164px" width="16" height="16" viewBox="0 0 16 16"><path d="M4.5 8h7" stroke="#0d1216" stroke-width="1.6"/></svg>
<div class="tb" style="left:614px;width:45px;text-align:center;font-weight:normal;letter-spacing:0">95.3</div>
<svg class="a" style="left:666px;top:164px" width="16" height="16" viewBox="0 0 16 16"><path d="M4.5 8h7M8 4.5v7" stroke="#0d1216" stroke-width="1.6"/></svg>
<svg class="a" style="left:701.5px;top:161px" width="21" height="23" viewBox="0 0 21 23"><path d="M5 15L10.5 2.5 16 15M7 10.8h7" stroke="#0d1216" stroke-width="1.9" fill="none"/><rect x="0.3" y="17" width="20.6" height="4.6" rx="2.3" fill="#c8d31c"/></svg>
<svg class="a" style="left:736px;top:164px" width="16" height="16" viewBox="0 0 16 16"><text x="1.5" y="14.6" font-family="Liberation Sans" font-weight="bold" font-size="16.5" fill="#a7a8ac">B</text></svg>
<svg class="a" style="left:767px;top:163px" width="16" height="18" viewBox="0 0 16 18"><path d="M7 15.5L10 2.5M4.5 15.5h5M7.5 2.5h5" stroke="#a7a8ac" stroke-width="1.5"/></svg>
<div class="a" style="left:798px;top:160px;width:1px;height:25px;background:#dcdde0"></div>
<svg class="a" style="left:811px;top:163px" width="20" height="20" viewBox="0 0 20 20"><path d="M2 4h16M5 8h10M2 12h16M5 16h10" stroke="#0d1216" stroke-width="1.6"/></svg>
<svg class="a" style="left:843px;top:162.5px" width="20" height="20" viewBox="0 0 20 20"><circle cx="3" cy="4" r="1.6" fill="#0d1216"/><circle cx="3" cy="10" r="1.6" fill="#0d1216"/><circle cx="3" cy="16" r="1.6" fill="#0d1216"/><path d="M7 4h11M7 10h11M7 16h11" stroke="#0d1216" stroke-width="1.6"/></svg>
<svg class="a" style="left:875px;top:162px" width="20" height="20" viewBox="0 0 20 20"><path d="M1.5 4h8M1.5 10h8M1.5 16h8" stroke="#0d1216" stroke-width="1.6"/><path d="M15 2.5v15M12 5.5l3-3 3 3M12 14.5l3 3 3-3" stroke="#0d1216" stroke-width="1.6" fill="none"/></svg>
<div class="a" style="left:908px;top:160px;width:1px;height:25px;background:#dcdde0"></div>
<div class="tb" style="left:928px">Effects</div>
<div class="a" style="left:992px;top:160px;width:1px;height:25px;background:#dcdde0"></div>
<svg class="a" style="left:1004px;top:161px" width="24" height="24" viewBox="0 0 24 24"><circle cx="8" cy="15" r="6" stroke="#c0c1c5" stroke-width="1.3" fill="none"/><circle cx="10.5" cy="12.5" r="6" stroke="#8a8b8f" stroke-width="1.3" fill="#fff"/><circle cx="13" cy="10" r="6.2" stroke="#0d1216" stroke-width="1.6" fill="#fff"/></svg>
<div class="tb" style="left:1033px">Animate</div>
<div class="a" style="left:1106px;top:160px;width:1px;height:25px;background:#dcdde0"></div>
<div class="tb" style="left:1125px">Position</div>
<div class="a" style="left:1196px;top:160px;width:1px;height:25px;background:#dcdde0"></div>
<svg class="a" style="left:1209px;top:164px" width="20" height="16" viewBox="0 0 20 16"><circle cx="3" cy="8" r="2" fill="#0d1216"/><circle cx="10" cy="8" r="2" fill="#0d1216"/><circle cx="17" cy="8" r="2" fill="#0d1216"/></svg>

<svg class="a" style="left:573.4px;top:218.2px;overflow:visible" width="521.4" height="293" viewBox="0 0 521.4 293">
<g id="deco"><rect x="0" y="0" width="521.4" height="293" fill="#722460"/>
<rect x="37" y="18.2" width="434.6" height="247.5" fill="#000"/>
<polygon points="48.4,0.0 100.0,0.0 100.0,28.0 48.4,28.0" fill="#50575a"/>
<polygon points="48.4,28.0 58.0,28.0 55.8,34.7 48.4,34.7" fill="#50575a"/>
<polygon points="66.9,0.0 99.3,0.0 91.6,24.8 58.5,24.8" fill="#e6087e"/>
<polygon points="102.4,0.0 163.3,0.0 154.8,24.8 94.3,24.8" fill="#76d4d4"/>
<polygon points="48.4,36.5 95.2,36.5 85.9,64.0 48.4,64.0" fill="#e6087e"/>
<polygon points="57.1,28.1 117.8,28.1 109.1,53.3 48.6,53.3" fill="#76d4d4"/>
<polygon points="48.4,293.0 100.0,293.0 100.0,265.0 48.4,265.0" fill="#50575a"/>
<polygon points="48.4,265.0 58.0,265.0 55.8,258.3 48.4,258.3" fill="#50575a"/>
<polygon points="66.9,293.0 99.3,293.0 91.6,268.2 58.5,268.2" fill="#e6087e"/>
<polygon points="102.4,293.0 163.3,293.0 154.8,268.2 94.3,268.2" fill="#76d4d4"/>
<polygon points="48.4,256.5 95.2,256.5 85.9,229.0 48.4,229.0" fill="#e6087e"/>
<polygon points="57.1,264.9 117.8,264.9 109.1,239.7 48.6,239.7" fill="#76d4d4"/>
<polygon points="459.8,0.0 408.2,0.0 408.2,28.0 459.8,28.0" fill="#50575a"/>
<polygon points="459.8,28.0 450.2,28.0 452.4,34.7 459.8,34.7" fill="#50575a"/>
<polygon points="441.3,0.0 408.9,0.0 416.6,24.8 449.7,24.8" fill="#e6087e"/>
<polygon points="405.8,0.0 344.9,0.0 353.4,24.8 413.9,24.8" fill="#76d4d4"/>
<polygon points="459.8,36.5 413.0,36.5 422.3,64.0 459.8,64.0" fill="#e6087e"/>
<polygon points="451.1,28.1 390.4,28.1 399.1,53.3 459.6,53.3" fill="#76d4d4"/>
<polygon points="459.8,293.0 408.2,293.0 408.2,265.0 459.8,265.0" fill="#50575a"/>
<polygon points="459.8,265.0 450.2,265.0 452.4,258.3 459.8,258.3" fill="#50575a"/>
<polygon points="441.3,293.0 408.9,293.0 416.6,268.2 449.7,268.2" fill="#e6087e"/>
<polygon points="405.8,293.0 344.9,293.0 353.4,268.2 413.9,268.2" fill="#76d4d4"/>
<polygon points="459.8,256.5 413.0,256.5 422.3,229.0 459.8,229.0" fill="#e6087e"/>
<polygon points="451.1,264.9 390.4,264.9 399.1,239.7 459.6,239.7" fill="#76d4d4"/>

</g>
<g id="nhs">
<path d="M49.2,97.6 L106.1,97.6 L97.3,108 L112.7,108 L97.2,174.3 L59,174.3 L41.7,108 L57.2,108 Z" fill="none" stroke="#fff" stroke-width="3.3" stroke-linejoin="miter"/>
<path d="M54.8,100.4 L100.5,100.4 L94,110.2" fill="none" stroke="#fff" stroke-width="0.9"/>
<text x="77" y="110.8" font-family="Liberation Sans" font-weight="bold" font-size="5.6" fill="#fff" stroke="#fff" stroke-width="0.25" text-anchor="middle" letter-spacing="0.15">NATIONAL</text>
<text x="77" y="117.2" font-family="Liberation Sans" font-weight="bold" font-size="5.6" fill="#fff" stroke="#fff" stroke-width="0.25" text-anchor="middle" letter-spacing="0.15">HONOR SOCIETY</text>
<path d="M76.5,138.5 q-6,-2 -6.5,-8 q0,-5 4,-8.5 q-0.5,3 1.5,4 q0,-4 5,-7 q-1.5,3 0,5 q3,2 2.5,6 q3,-1 3,-4 q2,6 -3,10.5 z" fill="#fff"/>
<polygon points="69.0,139.0 85.5,139.0 83.3,143.4 71.2,143.4" fill="#fff"/>
<polygon points="71.9,143.4 82.5,143.4 79.6,173.5 74.8,173.5" fill="#fff"/><rect x="74.5" y="172.0" width="4.8" height="11.0" fill="#fff"/><circle cx="76.8" cy="184.3" r="3" fill="#fff"/>
<polyline points="54.8,146.7 59.8,167.6" stroke="#fff" stroke-width="2.5" fill="none" stroke-linejoin="miter"/><polyline points="58.7,154.4 62.4,156.0 61.3,159.5" stroke="#fff" stroke-width="2.5" fill="none" stroke-linejoin="miter"/><polyline points="71.2,162.1 65.3,162.1 63.8,166.5 69.7,166.5 68.6,170.9 61.6,170.9" stroke="#fff" stroke-width="2.5" fill="none" stroke-linejoin="miter"/><polyline points="82.9,162.1 83.6,170.9 93.5,170.9" stroke="#fff" stroke-width="2.5" fill="none" stroke-linejoin="miter"/><polyline points="100.5,147.1 95.0,169.1" stroke="#fff" stroke-width="2.5" fill="none" stroke-linejoin="miter"/><polyline points="97.9,154.0 91.0,158.1 97.2,158.8 93.5,166.1" stroke="#fff" stroke-width="2.5" fill="none" stroke-linejoin="miter"/>
<circle cx="95.5" cy="179.5" r="0.9" fill="#fff"/>
</g>
<g id="stars">
<path d="M370,150 Q385,118 428,110" stroke="#6ad0d0" stroke-width="2.4" fill="none" stroke-linecap="round"/>
<path d="M413,127 Q420,118 430,110" stroke="#6ad0d0" stroke-width="1.5" fill="none"/>
<path d="M430,93 L432.5,104.5 L443,107 L433.5,111.5 L436,123 L428.5,113.5 L418,117 L425,109 L415,104 L427,105 Z" fill="#6ad0d0"/>
<text x="380" y="152.5" font-family="Liberation Serif" font-style="italic" font-weight="bold" font-size="37" fill="#f4f8f8" stroke="#7a2470" stroke-width="2.6" paint-order="stroke" letter-spacing="0.6">Stars</text>
<text x="439" y="164.5" font-family="Liberation Serif" font-weight="bold" font-style="italic" font-size="8" fill="#9adcdc">SCCA</text>
</g>
<g id="txt">
<text x="0" y="0" font-family="Liberation Serif" font-style="italic" font-size="35" fill="#d8e31c" stroke="#d8e31c" stroke-width="0.9" letter-spacing="0" transform="translate(160,154) scale(0.86,1) skewX(-10)">James Frazier</text>
<line x1="153.5" y1="172.5" x2="344.4" y2="172.5" stroke="#b8860b" stroke-width="1.3"/>
<line x1="337" y1="121.4" x2="337" y2="162.5" stroke="#9a8a20" stroke-width="0.6"/>
<rect x="126.5" y="121.4" width="244.7" height="41.1" fill="none" stroke="#7d2ae8" stroke-width="2"/>
<circle cx="126.5" cy="121.4" r="6" fill="#fff"/><circle cx="126.5" cy="162.5" r="6" fill="#fff"/>
<circle cx="371.2" cy="121.4" r="6" fill="#fff"/><circle cx="371.2" cy="162.5" r="6" fill="#fff"/>
<rect x="123.5" y="133" width="6" height="17" rx="3" fill="#fff"/>
<rect x="368.2" y="133" width="6" height="17" rx="3" fill="#fff"/>
<circle cx="232.2" cy="205.2" r="11" fill="#fff"/>
<circle cx="265.9" cy="205.2" r="11" fill="#fff"/>
<path d="M227.5,202 a5,5 0 0 1 8.5,-1.5 M236.9,208.4 a5,5 0 0 1 -8.5,1.5" stroke="#333" stroke-width="1.2" fill="none"/>
<path d="M236,198 v3 h-3 M228.4,212.4 v-3 h3" stroke="#333" stroke-width="1.1" fill="none"/>
<path d="M265.9,199 v12.4 M259.7,205.2 h12.4 M263.9,201 l2,-2 l2,2 M263.9,209.4 l2,2 l2,-2 M261.7,203.2 l-2,2 l2,2 M270.1,203.2 l2,2 l-2,2" stroke="#333" stroke-width="1.1" fill="none"/>
</g>
</svg>
<div class="a" style="left:1103px;top:340px;width:37px;height:37px;border-radius:50%;background:#fff;box-shadow:0 1px 3px rgba(0,0,0,.15)"></div>
<svg class="a" style="left:1111px;top:347px" width="22" height="22" viewBox="0 0 22 22"><path d="M15.5 10.5a6.5 5.8 0 1 1-4-5.3" stroke="#0d1216" stroke-width="1.6" fill="none"/><path d="M6 15.5l-1 3.5 3.5-2" stroke="#0d1216" stroke-width="1.5" fill="none"/><path d="M17 2v7M13.5 5.5h7" stroke="#0d1216" stroke-width="1.5"/></svg>
<div class="a" style="left:1216px;top:486px;width:41px;height:41px;border-radius:50%;background:linear-gradient(135deg,#1ba9d8,#5b5ee0 60%,#7d2ae8);box-shadow:0 1px 4px rgba(0,0,0,.15)"></div>
<div class="a" style="left:1218px;top:488px;width:37px;height:37px;border-radius:50%;background:#fff"></div>
<svg class="a" style="left:1224px;top:494px" width="26" height="26" viewBox="0 0 26 26"><defs><linearGradient id="mg" x1="0" y1="0" x2="1" y2="1"><stop offset="0" stop-color="#2aa8e0"/><stop offset="1" stop-color="#6a3ae8"/></linearGradient></defs><path d="M12 5.5 Q13 12 19.5 13 Q13 14 12 20.5 Q11 14 4.5 13 Q11 12 12 5.5z" fill="url(#mg)"/><path d="M19 3 Q19.4 5.6 22 6 Q19.4 6.4 19 9 Q18.6 6.4 16 6 Q18.6 5.6 19 3z" fill="#2aa8e0"/><circle cx="6" cy="20" r="1.4" fill="#5b6ae0"/></svg>
<div class="a" style="left:1264px;top:195px;width:16px;height:339px;background:#f1f1f1"></div>
<svg class="a" style="left:1266px;top:200px" width="12" height="8" viewBox="0 0 12 8"><path d="M2 6h8L6 2z" fill="#a0a0a0"/></svg>
<svg class="a" style="left:1266px;top:521px" width="12" height="8" viewBox="0 0 12 8"><path d="M2 2h8L6 6z" fill="#a0a0a0"/></svg>
<div class="a" style="left:405px;top:534px;width:859px;height:16px;background:#f1f1f1"></div>
<div class="a" style="left:1264px;top:534px;width:16px;height:16px;background:#dcdcdc"></div>
<svg class="a" style="left:407px;top:537px" width="10" height="10" viewBox="0 0 10 10"><path d="M7 2v6L3 5z" fill="#a0a0a0"/></svg>
<svg class="a" style="left:1252px;top:537px" width="10" height="10" viewBox="0 0 10 10"><path d="M3 2v6l4-3z" fill="#a0a0a0"/></svg>
<svg class="a" style="left:404px;top:374px;z-index:5" width="14" height="80" viewBox="0 0 14 80"><path d="M0 0 Q1 8 6 12 Q11 16 11 24 V56 Q11 64 6 68 Q1 72 0 80 Z" fill="#252627"/><path d="M7.5 36.5L4.5 40l3 3.5" stroke="#d0d0d0" stroke-width="1.3" fill="none"/></svg><div id="film" class="a"></div>
<div id="bot" class="a"></div>
<svg class="a" style="left:800px;top:538px" width="85" height="13" viewBox="0 0 85 13"><path d="M3 13.5 Q10 13 14 7.5 Q18 1.5 26 1.2 H60 Q67 1.5 71 7.5 Q75 13 82 13.5 Z" fill="#fff"/><path d="M3 12.8 Q10 12.8 14 7.5 Q18 1.5 26 1.2 H60 Q67 1.5 71 7.5 Q75 12.8 82 12.8" fill="none" stroke="#e4e5e8" stroke-width="0.6"/><path d="M39 7l3.2 3.2 3.2-3.2" stroke="#0d1216" stroke-width="1.5" fill="none"/></svg>
<div class="a" style="left:415.9px;top:565.8px;width:99.5px;height:60.1px;border-radius:6px;overflow:hidden">
<svg class="a" style="left:-3.8px;top:0" width="106.9" height="60.1" viewBox="0 0 521.4 293"><use href="#deco"/><use href="#nhs"/><use href="#stars"/><text x="250" y="155" font-family="Liberation Serif" font-style="italic" font-size="31" fill="#d8e31c" text-anchor="middle" stroke="#d8e31c" stroke-width="1.5">James Frazier</text><line x1="150" y1="172" x2="350" y2="172" stroke="#8a6a0a" stroke-width="3"/></svg>
<div class="a" style="left:-29px;top:30px;width:70px;height:55px;background:radial-gradient(closest-side,rgba(0,0,0,.8),rgba(0,0,0,.45) 55%,rgba(0,0,0,0))"></div>
<div class="a" style="left:3.5px;top:44.5px;font-size:11.5px;font-weight:bold;color:#fff;letter-spacing:-0.3px;line-height:13px">14</div>
</div>
<div class="a" style="left:534.2px;top:565.8px;width:106.9px;height:60.1px;border-radius:7px;overflow:hidden">
<svg width="106.9" height="60.1" viewBox="0 0 521.4 293"><use href="#deco"/><use href="#nhs"/><use href="#stars"/><text x="250" y="155" font-family="Liberation Serif" font-style="italic" font-size="31" fill="#d8e31c" text-anchor="middle" stroke="#d8e31c" stroke-width="1.5">Mary Guinn</text><line x1="150" y1="172" x2="350" y2="172" stroke="#8a6a0a" stroke-width="3"/></svg>
<div class="a" style="left:-25px;top:30px;width:70px;height:55px;background:radial-gradient(closest-side,rgba(0,0,0,.8),rgba(0,0,0,.45) 55%,rgba(0,0,0,0))"></div>
<div class="a" style="left:6.8px;top:44.5px;font-size:11.5px;font-weight:bold;color:#fff;letter-spacing:-0.3px;line-height:13px">15</div>
</div>
<div class="a" style="left:655.7px;top:565.8px;width:106.9px;height:60.1px;border-radius:7px;overflow:hidden">
<svg width="106.9" height="60.1" viewBox="0 0 521.4 293"><use href="#deco"/><use href="#nhs"/><use href="#stars"/><text x="250" y="130" font-family="Liberation Serif" font-style="italic" font-size="30" fill="#d8e31c" text-anchor="middle" stroke="#d8e31c" stroke-width="1.5">Esmeralda</text><text x="250" y="175" font-family="Liberation Serif" font-style="italic" font-size="30" fill="#d8e31c" text-anchor="middle" stroke="#d8e31c" stroke-width="1.5">Hernandez</text><line x1="150" y1="140" x2="350" y2="140" stroke="#8a6a0a" stroke-width="3"/></svg>
<div class="a" style="left:-25px;top:30px;width:70px;height:55px;background:radial-gradient(closest-side,rgba(0,0,0,.8),rgba(0,0,0,.45) 55%,rgba(0,0,0,0))"></div>
<div class="a" style="left:6.8px;top:44.5px;font-size:11.5px;font-weight:bold;color:#fff;letter-spacing:-0.3px;line-height:13px">16</div>
</div>
<div class="a" style="left:777.2px;top:565.8px;width:106.9px;height:60.1px;border-radius:7px;overflow:hidden">
<svg width="106.9" height="60.1" viewBox="0 0 521.4 293"><use href="#deco"/><use href="#nhs"/><use href="#stars"/><text x="250" y="155" font-family="Liberation Serif" font-style="italic" font-size="31" fill="#d8e31c" text-anchor="middle" stroke="#d8e31c" stroke-width="1.5">Gordon Ivey</text><line x1="150" y1="172" x2="350" y2="172" stroke="#8a6a0a" stroke-width="3"/></svg>
<div class="a" style="left:-25px;top:30px;width:70px;height:55px;background:radial-gradient(closest-side,rgba(0,0,0,.8),rgba(0,0,0,.45) 55%,rgba(0,0,0,0))"></div>
<div class="a" style="left:6.8px;top:44.5px;font-size:11.5px;font-weight:bold;color:#fff;letter-spacing:-0.3px;line-height:13px">17</div>
</div>
<div class="a" style="left:898.7px;top:565.8px;width:106.9px;height:60.1px;border-radius:7px;overflow:hidden">
<svg width="106.9" height="60.1" viewBox="0 0 521.4 293"><use href="#deco"/><use href="#nhs"/><use href="#stars"/><text x="250" y="155" font-family="Liberation Serif" font-style="italic" font-size="31" fill="#d8e31c" text-anchor="middle" stroke="#d8e31c" stroke-width="1.5">Sarah Landon</text><line x1="150" y1="172" x2="350" y2="172" stroke="#8a6a0a" stroke-width="3"/></svg>
<div class="a" style="left:-25px;top:30px;width:70px;height:55px;background:radial-gradient(closest-side,rgba(0,0,0,.8),rgba(0,0,0,.45) 55%,rgba(0,0,0,0))"></div>
<div class="a" style="left:6.8px;top:44.5px;font-size:11.5px;font-weight:bold;color:#fff;letter-spacing:-0.3px;line-height:13px">18</div>
</div>
<div class="a" style="left:1020.2px;top:565.8px;width:106.9px;height:60.1px;border-radius:7px;overflow:hidden">
<svg width="106.9" height="60.1" viewBox="0 0 521.4 293"><use href="#deco"/><use href="#nhs"/><use href="#stars"/><text x="250" y="155" font-family="Liberation Serif" font-style="italic" font-size="31" fill="#d8e31c" text-anchor="middle" stroke="#d8e31c" stroke-width="1.5">Grace Loettinger</text><line x1="150" y1="172" x2="350" y2="172" stroke="#8a6a0a" stroke-width="3"/></svg>
<div class="a" style="left:-25px;top:30px;width:70px;height:55px;background:radial-gradient(closest-side,rgba(0,0,0,.8),rgba(0,0,0,.45) 55%,rgba(0,0,0,0))"></div>
<div class="a" style="left:6.8px;top:44.5px;font-size:11.5px;font-weight:bold;color:#fff;letter-spacing:-0.3px;line-height:13px">19</div>
</div>
<div class="a" style="left:1141.7px;top:565.8px;width:106.9px;height:60.1px;border-radius:7px;overflow:hidden">
<svg width="106.9" height="60.1" viewBox="0 0 521.4 293"><use href="#deco"/><use href="#nhs"/><use href="#stars"/><text x="250" y="155" font-family="Liberation Serif" font-style="italic" font-size="31" fill="#d8e31c" text-anchor="middle" stroke="#d8e31c" stroke-width="1.5">Makenzi Laurer</text><line x1="150" y1="172" x2="350" y2="172" stroke="#8a6a0a" stroke-width="3"/></svg>
<div class="a" style="left:-25px;top:30px;width:70px;height:55px;background:radial-gradient(closest-side,rgba(0,0,0,.8),rgba(0,0,0,.45) 55%,rgba(0,0,0,0))"></div>
<div class="a" style="left:6.8px;top:44.5px;font-size:11.5px;font-weight:bold;color:#fff;letter-spacing:-0.3px;line-height:13px">20</div>
</div>
<div class="a" style="left:1263.2px;top:565.8px;width:106.9px;height:60.1px;border-radius:7px;overflow:hidden">
<svg width="106.9" height="60.1" viewBox="0 0 521.4 293"><use href="#deco"/><use href="#nhs"/><use href="#stars"/><text x="250" y="155" font-family="Liberation Serif" font-style="italic" font-size="31" fill="#d8e31c" text-anchor="middle" stroke="#d8e31c" stroke-width="1.5"></text><line x1="150" y1="172" x2="350" y2="172" stroke="#8a6a0a" stroke-width="3"/></svg>
<div class="a" style="left:-25px;top:30px;width:70px;height:55px;background:radial-gradient(closest-side,rgba(0,0,0,.8),rgba(0,0,0,.45) 55%,rgba(0,0,0,0))"></div>
<div class="a" style="left:6.8px;top:44.5px;font-size:11.5px;font-weight:bold;color:#fff;letter-spacing:-0.3px;line-height:13px">21</div>
</div>

<div class="a" style="left:412.6px;top:562.3px;width:106.1px;height:66px;border:2.5px solid #8f9aa0;border-radius:9px;box-shadow:inset 0 0 0 1px #fff"></div>
<div class="a" style="left:405px;top:628.5px;width:875px;height:15.5px;background:#f1f1f1"></div>
<div class="a" style="left:640px;top:630.5px;width:121px;height:12.2px;background:#c1c1c1"></div>
<svg class="a" style="left:407px;top:631px" width="10" height="10" viewBox="0 0 10 10"><path d="M7 1.5v7L2.5 5z" fill="#505050"/></svg>
<svg class="a" style="left:1267px;top:631px" width="10" height="10" viewBox="0 0 10 10"><path d="M3 1.5v7L7.5 5z" fill="#505050"/></svg>

<svg class="a" style="left:416px;top:654px" width="22" height="18" viewBox="0 0 22 18"><path d="M2 3h14M2 7.5h10M2 12h6M2 16.5h4" stroke="#0d1216" stroke-width="1.5"/><path d="M10 16.5l1-3.5 8-8 2.5 2.5-8 8z" stroke="#0d1216" stroke-width="1.5" fill="none"/></svg>
<div class="bt" style="left:446px">Notes</div>
<div class="bt" style="left:509px">Page 14 of 49</div>
<div class="bt" style="left:897px">29%</div>
<div class="a" style="left:953px;top:662px;width:50px;height:2px;background:#8a8d91"></div>
<div class="a" style="left:1003px;top:662.5px;width:138px;height:1px;background:#d0d2d6"></div>
<div class="a" style="left:997px;top:657px;width:13px;height:13px;border-radius:50%;background:#0d1216"></div>
<svg class="a" style="left:1161px;top:651px" width="24" height="24" viewBox="0 0 24 24"><path d="M6 3h14v16" stroke="#0d1216" stroke-width="1.3" fill="none"/><path d="M4 5h14v16" stroke="#0d1216" stroke-width="1.3" fill="none"/><rect x="2" y="7" width="14" height="15" rx="1" stroke="#0d1216" stroke-width="1.3" fill="#fff"/><text x="9" y="18.5" font-family="Liberation Sans" font-size="8.5" fill="#0d1216" text-anchor="middle">49</text></svg>
<svg class="a" style="left:1201px;top:653px" width="20" height="20" viewBox="0 0 20 20"><path d="M11.5 2.5h6v6M17.5 2.5l-6 6M8.5 17.5h-6v-6M2.5 17.5l6-6" stroke="#0d1216" stroke-width="1.6" fill="none"/></svg>
<div class="a" style="left:1234px;top:651px;width:1px;height:25px;background:#dcdde0"></div>
<svg class="a" style="left:1245px;top:651px" width="24" height="24" viewBox="0 0 24 24"><circle cx="12" cy="12" r="10" stroke="#0d1216" stroke-width="1.5" fill="none"/><path d="M9 9.5a3 3 0 1 1 4 2.8c-.7.3-1 .8-1 1.5v.7" stroke="#0d1216" stroke-width="1.5" fill="none"/><circle cx="12" cy="17.3" r="1" fill="#0d1216"/></svg>

</body></html>
